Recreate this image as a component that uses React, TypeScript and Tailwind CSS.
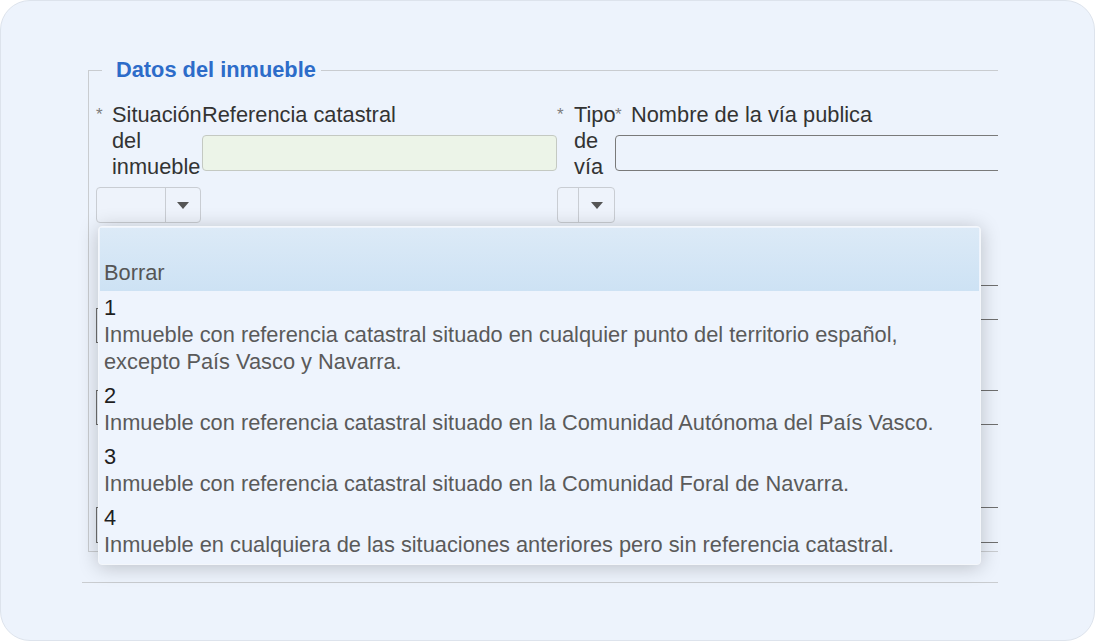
const OPTIONS = [
  {
    code: "1",
    lines: [
      "Inmueble con referencia catastral situado en cualquier punto del territorio español,",
      "excepto País Vasco y Navarra.",
    ],
  },
  {
    code: "2",
    lines: ["Inmueble con referencia catastral situado en la Comunidad Autónoma del País Vasco."],
  },
  {
    code: "3",
    lines: ["Inmueble con referencia catastral situado en la Comunidad Foral de Navarra."],
  },
  {
    code: "4",
    lines: ["Inmueble en cualquiera de las situaciones anteriores pero sin referencia catastral."],
  },
];

function Caret() {
  return (
    <svg width="12" height="7" viewBox="0 0 12 7" className="block">
      <path d="M0 0 L12 0 L6 7 Z" fill="#555" />
    </svg>
  );
}

function SelectBox({ width, left }: { width: string; left: string }) {
  return (
    <div className={`mt-[7px] flex h-[36px] ${width} rounded-[4px] border border-[#c9cdd3] bg-[#eef3fb]`}>
      <div className={`${left} h-full border-r border-[#c9cdd3]`} />
      <div className="flex flex-1 items-center justify-center">
        <Caret />
      </div>
    </div>
  );
}

function Required() {
  return <span className="w-[16px] shrink-0 text-[17px] leading-[26px] text-[#7d7d7d]">*</span>;
}

export default function App() {
  return (
    <div className="h-[641px] w-full bg-white font-['Liberation_Sans',Arial,sans-serif] text-[21.8px] leading-[26px]">
      <div className="relative h-full overflow-hidden rounded-[30px] border border-[#dde3ec] bg-[#edf3fc]">
        <div className="ml-[81px] w-[916px] overflow-hidden pt-[56px]">
          <fieldset className="ml-[6px] w-[940px] border border-[#c9ccd0] pb-[8px] pl-[7px] pt-[19px]">
            <legend className="ml-[6px] pl-[14px] pr-[5px] font-bold text-[#2d6cc9]">Datos del inmueble</legend>

            <div className="flex items-start text-[#333]">
              <div className="w-[106px] shrink-0">
                <div className="flex">
                  <Required />
                  <span>Situación del inmueble</span>
                </div>
                <SelectBox width="w-[105px]" left="w-[69px]" />
              </div>

              <div className="w-[355px] shrink-0">
                <div>Referencia catastral</div>
                <div className="mt-[7px] h-[36px] rounded-[4px] border border-[#c4c9c2] bg-[#ecf4e8]" />
              </div>

              <div className="w-[58px] shrink-0">
                <div className="flex">
                  <span className="w-[17px] shrink-0 text-[17px] leading-[26px] text-[#7d7d7d]">*</span>
                  <span>Tipo de vía</span>
                </div>
                <SelectBox width="w-[58px]" left="w-[21px]" />
              </div>

              <div className="flex-1">
                <div className="flex">
                  <Required />
                  <span>Nombre de la vía publica</span>
                </div>
                <div className="mt-[7px] h-[36px] rounded-l-[4px] border border-[#7a7a7a]" />
              </div>
            </div>

            <div className="flex items-start">
              <div className="mt-[85px] h-[35px] w-[460px] border border-[#6f6f6f]" />
              <div className="ml-[40px] mt-[62px] h-[35px] flex-1 border border-[#6f6f6f]" />
            </div>
            <div className="mt-[47px] h-[35px] border border-[#6f6f6f]" />
            <div className="mt-[82px] h-[36px] border border-[#6f6f6f]" />
          </fieldset>
          <div className="mt-[30px] border-t border-[#c9ccd0]" />
        </div>

        <div className="absolute left-[97px] top-[225px] w-[883px] rounded-[4px] border border-[#f4f7fb] bg-[#eef4fd] px-[1px] pb-[2px] pt-[1px] shadow-[0_2px_20px_rgba(0,0,0,0.22)]">
          <div className="bg-linear-to-b from-[#dceaf7] to-[#cde2f4] px-[4px] py-[5px] text-[#555]">
            <div className="leading-[26px]">&nbsp;</div>
            <div className="leading-[27px]">Borrar</div>
          </div>
          {OPTIONS.map((option) => (
            <div key={option.code} className="px-[4px] py-[4px]">
              <div className="leading-[26px] text-[#1f1f1f]">{option.code}</div>
              {option.lines.map((line) => (
                <div key={line} className="leading-[27px] text-[#5a5a5a]">
                  {line}
                </div>
              ))}
            </div>
          ))}
        </div>
      </div>
    </div>
  );
}
